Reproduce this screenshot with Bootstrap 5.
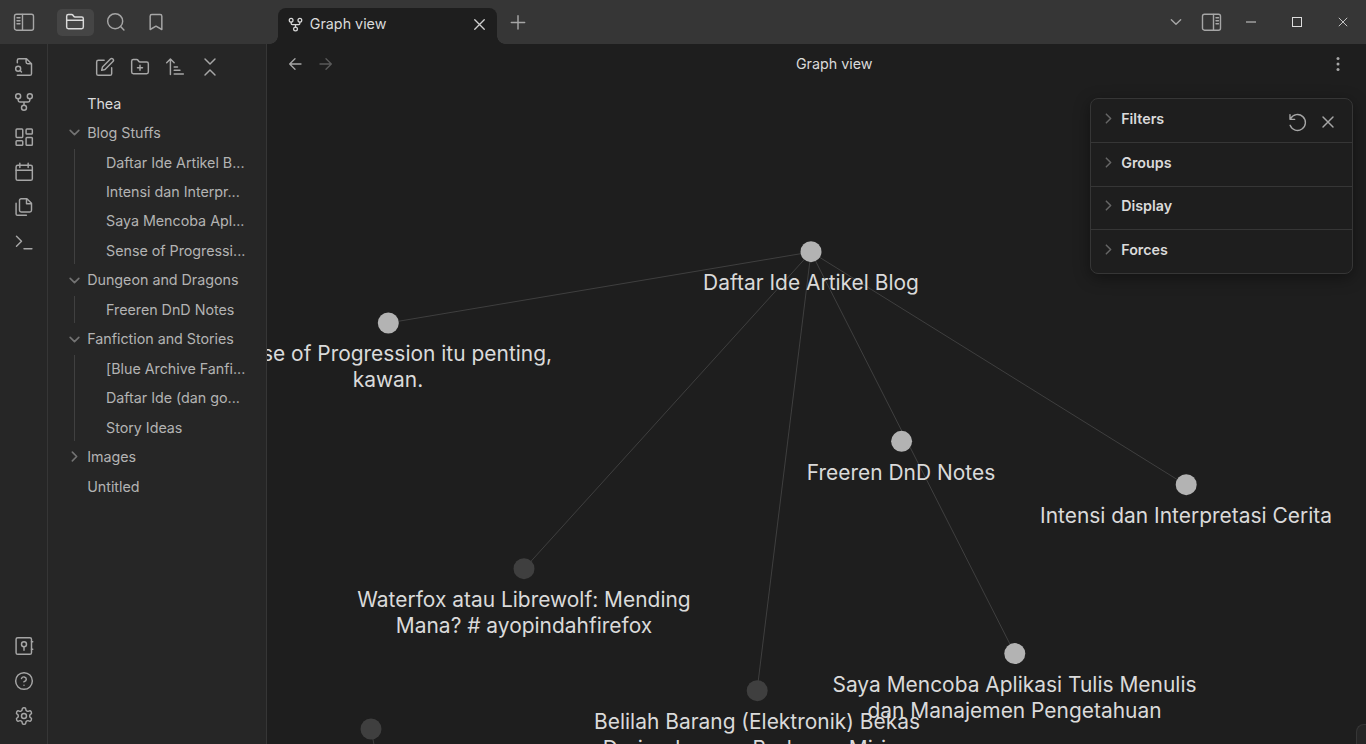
<!DOCTYPE html>
<html lang="id" data-bs-theme="dark">
<head>
<meta charset="utf-8">
<meta name="viewport" content="width=device-width, initial-scale=1">
<title>Graph view</title>
<link href="https://cdn.jsdelivr.net/npm/bootstrap@5.3.0/dist/css/bootstrap.min.css" rel="stylesheet">
<style>
:root{--bg:#1e1e1e;--side:#262626;--bar:#363636;--line:#363636;--ico:#b3b3b3;--txt:#dadada}
body{font-family:Inter,"Liberation Sans",sans-serif;font-size:14.3px;background:var(--bg);color:var(--txt);overflow:hidden}
svg{display:block;flex:none}
.ic{fill:none;stroke:#a6a6a6;stroke-width:1.75;stroke-linecap:round;stroke-linejoin:round}
.titlebar{height:44px;background:var(--bar)}
.title-left{width:278px;padding-left:13px}
.tool-group{margin-left:21.5px;gap:3.5px}
.tool-btn{width:37px;height:27px;border-radius:5px}
.tool-btn.active{background:#454545}
.tool-btn.active .ic{stroke:#dadada}
.tab-item{width:219px;height:36px;background:var(--bg);border-radius:8px 8px 0 0;padding:0 8px 4px 10px}
.tab-item::before,.tab-item::after{content:"";position:absolute;bottom:0;width:8px;height:8px}
.tab-item::before{left:-8px;background:radial-gradient(circle at 0 0,transparent 7.5px,var(--bg) 8px)}
.tab-item::after{right:-8px;background:radial-gradient(circle at 100% 0,transparent 7.5px,var(--bg) 8px)}
.ribbon{width:48px;background:var(--side);border-right:1px solid var(--line);padding:13px 0 18px 0}
.ribbon .group{gap:15px}
.side{width:219px;background:var(--side);border-right:1px solid var(--line)}
.side-tools{height:46px;gap:15px;padding-left:1px}
.tree{color:var(--ico);padding-left:18px;line-height:27.48px;margin-top:-.4px;letter-spacing:-.02px}
.tree-row{height:27.48px;margin-bottom:2px;white-space:nowrap}
.tree-row .ic{stroke:#737373;stroke-width:3}
.chev{width:16px;height:16px;margin-right:5.2px;display:flex;align-items:center;justify-content:center}
.kids{margin-left:8px;border-left:1px solid #404040;padding-left:31px;margin-bottom:2px}
.kids .tree-row:last-child{margin-bottom:0}
.view-head{height:40px;padding:0 20.5px 0 20px}
.graph{inset:0;width:100%;height:100%}
.graph line{stroke:#3f3f3f;stroke-width:1}
.graph text{fill:var(--txt);font-size:20.95px;text-anchor:middle}
.controls{top:54px;right:13px;width:263px;background:var(--bg);border:1px solid #363636;border-radius:8px;box-shadow:0 4px 16px rgba(0,0,0,.4)}
.control-row{height:43.4px;padding:0 0 4px 9px;font-weight:600}
.control-row+.control-row{border-top:1px solid #363636}
.control-row .chev .ic{stroke:#666;stroke-width:2.8}
.control-btns{right:14px;top:13px;gap:11px}
.status{right:0;bottom:0;width:10px;height:20px;background:var(--side);border:1px solid var(--line);border-width:1px 0 0 1px;border-radius:8px 0 0 0}
</style>
</head>
<body>
<svg class="d-none">
<symbol id="fork" viewBox="0 0 24 24"><circle cx="12" cy="19" r="3"/><circle cx="5" cy="5" r="3"/><circle cx="19" cy="5" r="3"/><path d="M19 8v2a2 2 0 0 1-2 2H7a2 2 0 0 1-2-2V8M12 12v4"/></symbol>
<symbol id="x" viewBox="0 0 24 24"><path d="M18 6 6 18M6 6l12 12"/></symbol>
<symbol id="down" viewBox="0 0 24 24"><path d="m4 8 8 8 8-8"/></symbol>
<symbol id="right" viewBox="0 0 24 24"><path d="m8 4 8 8-8 8"/></symbol>
</svg>
<div class="d-flex flex-column vh-100">
<header class="titlebar d-flex">
  <div class="title-left d-flex align-items-center">
    <svg class="ic" style="stroke-width:1.4" width="22" height="20" viewBox="0 0 22 20"><rect x="1.5" y="2.2" width="19" height="16" rx="2"/><path d="M9.5 2.5v15.5M4 5.8h3M4 8.8h3M4 11.8h3"/></svg>
    <div class="tool-group d-flex">
      <div class="tool-btn active d-flex align-items-center justify-content-center"><svg class="ic" width="20" height="20" viewBox="0 0 24 24"><path d="M2 10h20M4 20h16a2 2 0 0 0 2-2V8a2 2 0 0 0-2-2h-7.9a2 2 0 0 1-1.7-.9l-.8-1.2A2 2 0 0 0 7.900 3H4a2 2 0 0 0-2 2v13a2 2 0 0 0 2 2Z"/></svg></div>
      <div class="tool-btn d-flex align-items-center justify-content-center"><svg class="ic" width="20" height="20" viewBox="0 0 24 24"><circle cx="11" cy="11" r="9"/><path d="m21.5 21.5-4-4"/></svg></div>
      <div class="tool-btn d-flex align-items-center justify-content-center"><svg class="ic" width="20" height="20" viewBox="0 0 24 24"><path d="m19 21-7-4-7 4V5a2 2 0 0 1 2-2h10a2 2 0 0 1 2 2Z"/></svg></div>
    </div>
  </div>
  <div class="tab-item position-relative align-self-end d-flex align-items-center">
    <svg class="ic" style="stroke:#dadada;stroke-width:2" width="15" height="15"><use href="#fork"/></svg>
    <span class="flex-grow-1" style="margin-left:6.8px">Graph view</span>
    <svg class="ic" style="stroke:#cfcfcf;stroke-width:1.7" width="19" height="19"><use href="#x"/></svg>
  </div>
  <svg class="ic align-self-center" style="margin-left:11px" width="20" height="20" viewBox="0 0 24 24"><path d="M4 12.500h16M12 4.500v16"/></svg>
  <div class="ms-auto d-flex align-items-center" style="padding-right:18px">
    <svg class="ic" style="stroke-width:2.4" width="14" height="14"><use href="#down"/></svg>
    <svg class="ic" style="stroke-width:1.4;margin-left:18px" width="22" height="20" viewBox="0 0 22 20"><rect x="1.5" y="2.2" width="18" height="16" rx="2"/><path d="M12.500 2.500v15.500M15 5.800h2.500M15 8.800h2.500M15 11.800h2.500"/></svg>
    <svg style="margin-left:23px" width="10" height="10"><path d="M0 5h10" stroke="#999" stroke-width="1.6"/></svg>
    <svg style="margin-left:36px" width="10" height="10"><rect x=".5" y=".5" width="9" height="9" fill="none" stroke="#ddd"/></svg>
    <svg style="margin-left:36px" width="10" height="10"><path d="m.8.8 8.4 8.4m0-8.400L.8 9.200" stroke="#c4c4c4"/></svg>
  </div>
</header>
<div class="d-flex flex-grow-1" style="min-height:0">
  <nav class="ribbon d-flex flex-column align-items-center justify-content-between">
    <div class="group d-flex flex-column">
      <svg class="ic" width="20" height="20" viewBox="0 0 24 24"><path d="M14.500 2v4a2 2 0 0 0 2 2h4.500M4 7V4a2 2 0 0 1 2-2h9l6 6v12a2 2 0 0 1-2 2H4"/><circle cx="5" cy="14" r="3"/><path d="m9 18-1.700-1.700"/></svg>
      <svg class="ic" width="20" height="20"><use href="#fork"/></svg>
      <svg class="ic" width="20" height="20" viewBox="0 0 24 24"><rect x="2.500" y="2.500" width="8" height="10" rx="1"/><rect x="14.500" y="2.500" width="7.500" height="6" rx="1"/><rect x="14.500" y="12.500" width="7.500" height="9.500" rx="1"/><rect x="2.500" y="16.500" width="8" height="5.500" rx="1"/></svg>
      <svg class="ic" width="20" height="20" viewBox="0 0 24 24"><rect x="2.500" y="4" width="19.500" height="18" rx="2"/><path d="M2.500 10H22M7 1.500v5M17 1.500v5"/></svg>
      <svg class="ic" width="20" height="20" viewBox="0 0 24 24"><path d="M15.500 2H8.600a2 2 0 0 0-2 2v12a2 2 0 0 0 2 2H19a2 2 0 0 0 2-2V7.500zM15 2v6h6M2.500 7.600v12.800c0 .9.700 1.600 1.600 1.600h10.800"/></svg>
      <svg class="ic" width="20" height="20" viewBox="0 0 24 24"><path d="m3 17 6-6-6-6M12 20h9.500"/></svg>
    </div>
    <div class="group d-flex flex-column">
      <svg class="ic" width="20" height="20" viewBox="0 0 24 24"><rect x="2.500" y="2" width="18.500" height="20" rx="2"/><circle cx="12" cy="10" r="3"/><path d="M12 13v4M21 7h1.500M21 16h1.500"/></svg>
      <svg class="ic" width="20" height="20" viewBox="0 0 24 24"><circle cx="12" cy="12" r="10"/><path d="M9 9a3 3 0 0 1 5.800 1c0 2-3 3-3 3M12 17h.010"/></svg>
      <svg class="ic" width="20" height="20" viewBox="0 0 24 24"><path d="M12.220 2h-.440a2 2 0 0 0-2 2v.180a2 2 0 0 1-1 1.730l-.430.250a2 2 0 0 1-2 0l-.150-.080a2 2 0 0 0-2.730.730l-.220.380a2 2 0 0 0 .730 2.730l.150.100a2 2 0 0 1 1 1.720v.510a2 2 0 0 1-1 1.740l-.150.090a2 2 0 0 0-.730 2.730l.220.380a2 2 0 0 0 2.730.730l.150-.080a2 2 0 0 1 2 0l.430.250a2 2 0 0 1 1 1.730V20a2 2 0 0 0 2 2h.440a2 2 0 0 0 2-2v-.180a2 2 0 0 1 1-1.730l.430-.250a2 2 0 0 1 2 0l.150.080a2 2 0 0 0 2.730-.730l.220-.390a2 2 0 0 0-.730-2.730l-.150-.080a2 2 0 0 1-1-1.740v-.500a2 2 0 0 1 1-1.740l.150-.090a2 2 0 0 0 .730-2.730l-.220-.380a2 2 0 0 0-2.730-.730l-.150.080a2 2 0 0 1-2 0l-.430-.250a2 2 0 0 1-1-1.730V4a2 2 0 0 0-2-2z"/><circle cx="12" cy="12" r="3"/></svg>
    </div>
  </nav>
  <aside class="side flex-shrink-0">
    <div class="side-tools d-flex align-items-center justify-content-center">
      <svg class="ic" width="20" height="20" viewBox="0 0 24 24"><path d="M11 4H4a2 2 0 0 0-2 2v14a2 2 0 0 0 2 2h14a2 2 0 0 0 2-2v-7M18.500 2.500a2.120 2.120 0 0 1 3 3L12 15l-4 1 1-4Z"/></svg>
      <svg class="ic" width="20" height="20" viewBox="0 0 24 24"><path d="M12 10v6M9 13h6M4 20h16a2 2 0 0 0 2-2V8a2 2 0 0 0-2-2h-7.900a2 2 0 0 1-1.700-.900l-.800-1.200A2 2 0 0 0 7.900 3H4a2 2 0 0 0-2 2v13a2 2 0 0 0 2 2Z"/></svg>
      <svg class="ic" width="20" height="20" viewBox="0 0 24 24"><path d="m2 7 4.500-4.500L11 7M6.500 3v18M11 12h4M11 16h7M11 20.500h11"/></svg>
      <svg class="ic" width="20" height="20" viewBox="0 0 24 24"><path d="m6 2.500 6 6 6-6M6 21.500l6-6 6 6"/></svg>
    </div>
    <div class="tree">
      <div class="tree-row d-flex align-items-center" style="color:#dadada"><span class="chev"></span>Thea</div>
      <div class="tree-row d-flex align-items-center"><span class="chev"><svg class="ic" width="13" height="13"><use href="#down"/></svg></span>Blog Stuffs</div>
      <div class="kids"><div class="tree-row">Daftar Ide Artikel B...</div><div class="tree-row">Intensi dan Interpr...</div><div class="tree-row">Saya Mencoba Apl...</div><div class="tree-row">Sense of Progressi...</div></div>
      <div class="tree-row d-flex align-items-center"><span class="chev"><svg class="ic" width="13" height="13"><use href="#down"/></svg></span>Dungeon and Dragons</div>
      <div class="kids"><div class="tree-row">Freeren DnD Notes</div></div>
      <div class="tree-row d-flex align-items-center"><span class="chev"><svg class="ic" width="13" height="13"><use href="#down"/></svg></span>Fanfiction and Stories</div>
      <div class="kids"><div class="tree-row">[Blue Archive Fanfi...</div><div class="tree-row">Daftar Ide (dan go...</div><div class="tree-row">Story Ideas</div></div>
      <div class="tree-row d-flex align-items-center"><span class="chev"><svg class="ic" width="13" height="13"><use href="#right"/></svg></span>Images</div>
      <div class="tree-row d-flex align-items-center"><span class="chev"></span>Untitled</div>
    </div>
  </aside>
  <main class="position-relative flex-grow-1 overflow-hidden">
    <svg class="graph position-absolute" viewBox="267 44 1099 700" preserveAspectRatio="xMinYMin slice">
      <line x1="811" y1="252" x2="388" y2="323"/><line x1="811" y1="252" x2="524" y2="569"/><line x1="811" y1="252" x2="757" y2="691"/><line x1="811" y1="252" x2="1015" y2="654"/><line x1="811" y1="252" x2="1186" y2="485"/><line x1="371" y1="729" x2="375" y2="750"/>
      <g fill="#b3b3b3"><circle cx="811" cy="251.700" r="10.500"/><circle cx="388.300" cy="323" r="10.500"/><circle cx="901.600" cy="441.300" r="10.500"/><circle cx="1186.200" cy="484.700" r="10.500"/><circle cx="1014.800" cy="653.600" r="10.500"/></g>
      <g fill="#3f3f3f"><circle cx="524" cy="568.700" r="10.500"/><circle cx="757.200" cy="690.700" r="10.500"/><circle cx="371" cy="729" r="10.500"/></g>
      <text x="811" y="290">Daftar Ide Artikel Blog</text>
      <text x="388" y="361">Sense of Progression itu penting,</text><text x="388" y="387">kawan.</text>
      <text x="901" y="479.500">Freeren DnD Notes</text>
      <text x="1186" y="523">Intensi dan Interpretasi Cerita</text>
      <text x="524" y="607">Waterfox atau Librewolf: Mending</text><text x="524" y="633">Mana? # ayopindahfirefox</text>
      <text x="1014.500" y="692">Saya Mencoba Aplikasi Tulis Menulis</text><text x="1014.500" y="718">dan Manajemen Pengetahuan</text>
      <text x="757" y="729">Belilah Barang (Elektronik) Bekas</text><text x="757" y="756">Daripada yang Berharga Miring</text>
    </svg>
    <div class="view-head position-relative d-flex align-items-center">
      <svg class="ic" style="stroke-width:2" width="16" height="16" viewBox="0 0 24 24"><path d="M21 12H4M12 20l-8-8 8-8"/></svg>
      <svg class="ic" style="stroke:#5a5a5a;stroke-width:2;margin-left:15px" width="16" height="16" viewBox="0 0 24 24"><path d="M3 12h17M12 4l8 8-8 8"/></svg>
      <span class="flex-grow-1 text-center" style="padding-left:5px">Graph view</span>
      <svg width="16" height="16" fill="#a6a6a6"><circle cx="8" cy="2.500" r="1.500"/><circle cx="8" cy="8" r="1.500"/><circle cx="8" cy="13.500" r="1.500"/></svg>
    </div>
    <section class="controls position-absolute">
      <div class="control-row d-flex align-items-center"><span class="chev"><svg class="ic" width="13" height="13"><use href="#right"/></svg></span>Filters</div>
      <div class="control-row d-flex align-items-center"><span class="chev"><svg class="ic" width="13" height="13"><use href="#right"/></svg></span>Groups</div>
      <div class="control-row d-flex align-items-center"><span class="chev"><svg class="ic" width="13" height="13"><use href="#right"/></svg></span>Display</div>
      <div class="control-row d-flex align-items-center"><span class="chev"><svg class="ic" width="13" height="13"><use href="#right"/></svg></span>Forces</div>
      <div class="control-btns position-absolute d-flex align-items-center">
        <svg class="ic" width="19" height="19" viewBox="0 0 24 24"><path d="M2.500 2v6h6M2.660 15.570a10 10 0 1 0 .570-8.380"/></svg>
        <svg class="ic" width="20" height="20"><use href="#x"/></svg>
      </div>
    </section>
    <div class="status position-absolute"></div>
  </main>
</div>
</div>
<script src="https://cdn.jsdelivr.net/npm/bootstrap@5.3.0/dist/js/bootstrap.bundle.min.js"></script>
</body>
</html>
